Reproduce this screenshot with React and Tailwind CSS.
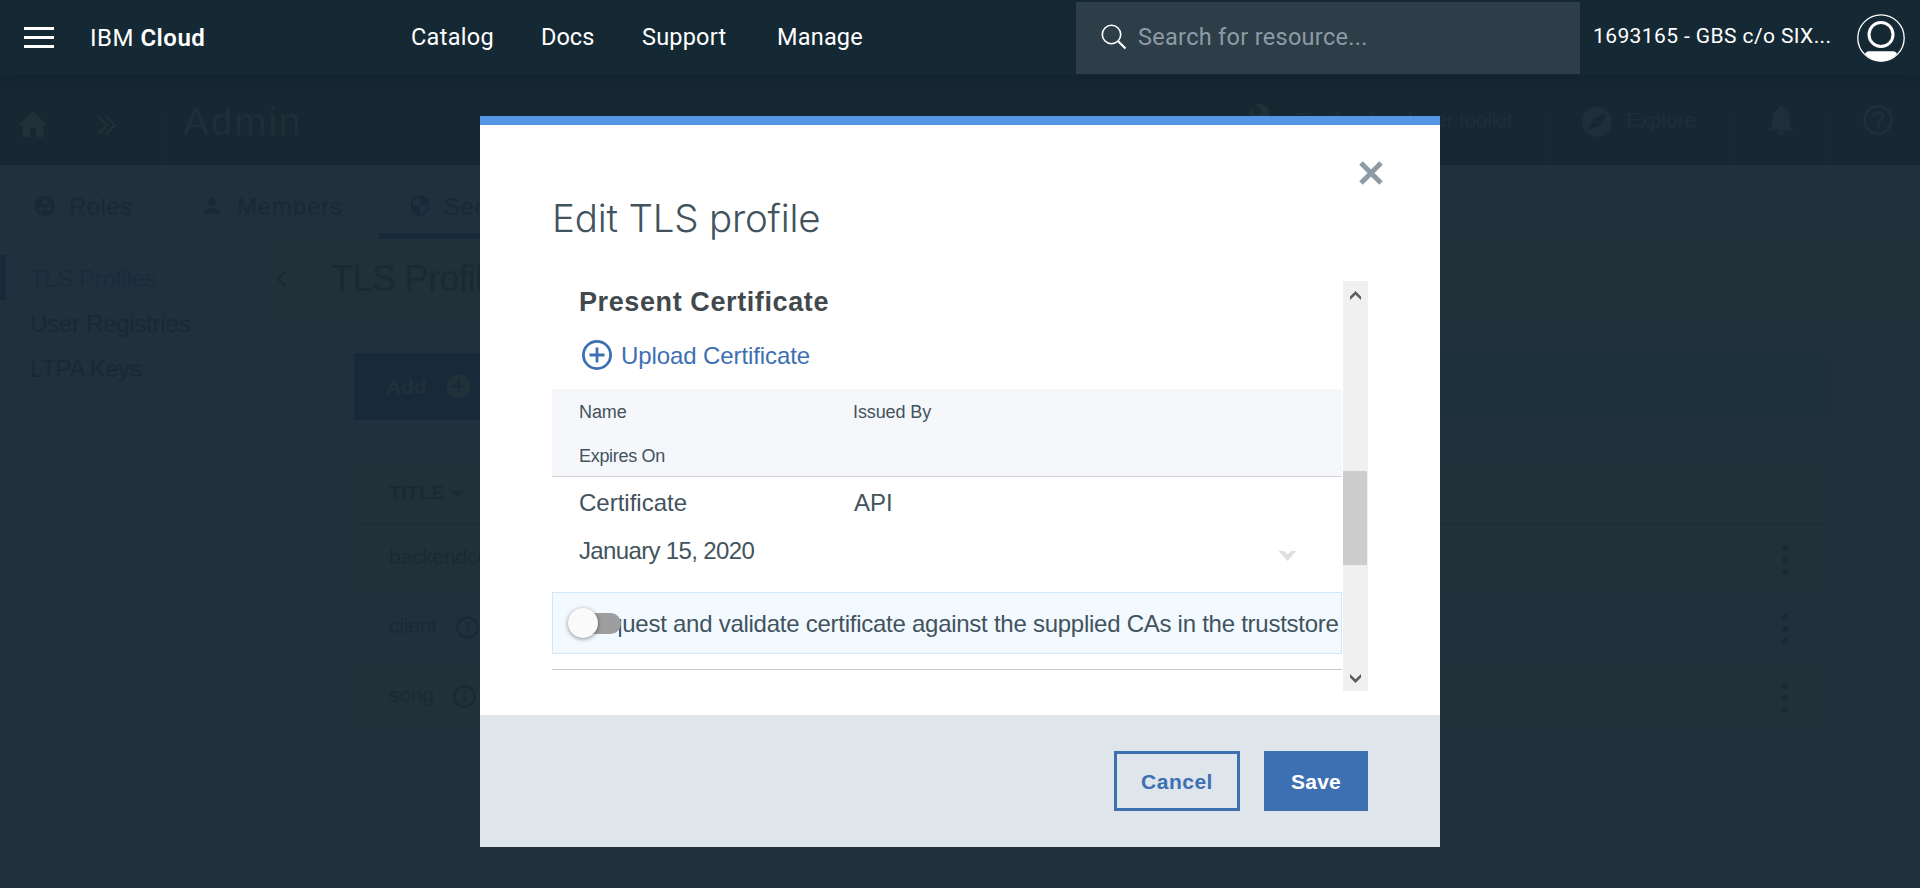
import React from "react";
import {
  MdAddCircle,
  MdBuild,
  MdExplore,
  MdGroupWork,
  MdHelpOutline,
  MdHome,
  MdInfoOutline,
  MdNotifications,
  MdPerson,
  MdSecurity,
} from "react-icons/md";

function TopBar() {
  return (
    <header className="relative z-10 flex h-[75px] items-center bg-[#152935] font-[Roboto,sans-serif] text-2xl text-white shadow-[0_6px_16px_rgba(16,32,40,0.5)]">
      <div className="ml-6 flex w-[30px] flex-col gap-1.5">
        <span className="h-[3px] bg-white" />
        <span className="h-[3px] bg-white" />
        <span className="h-[3px] bg-white" />
      </div>
      <div className="ml-9 w-[321px] whitespace-nowrap text-[24px] tracking-[0.5px]">
        IBM <span className="font-semibold">Cloud</span>
      </div>
      <nav className="flex grow whitespace-nowrap text-[23.5px]">
        <span className="w-[130px] tracking-[0.3px]">Catalog</span>
        <span className="w-[101px]">Docs</span>
        <span className="w-[135px] tracking-[0.2px]">Support</span>
        <span className="tracking-[0.2px]">Manage</span>
      </nav>
      <div className="flex h-[72px] w-[504px] items-center bg-[#2d3e49] pb-px pl-[25px] text-[#8c9ba5]">
        <svg className="h-[26px] w-[26px]" viewBox="0 0 26 26" fill="none" stroke="#fff" strokeWidth="1.6">
          <circle cx="10.5" cy="10.5" r="9.2" />
          <path d="M17 17l7.5 7.5" strokeWidth="2.2" />
        </svg>
        <span className="ml-[11px] mt-0.5 whitespace-nowrap text-[23.5px] tracking-[0.3px]">Search for resource...</span>
      </div>
      <div className="ml-[13px] w-[264px] whitespace-nowrap pb-1 text-[21px] tracking-[0.4px]">1693165 - GBS c/o SIX...</div>
      <svg className="mr-[15px] h-12 w-12" viewBox="0 0 48 48" fill="none" stroke="#fff">
        <circle cx="24" cy="24" r="23.2" strokeWidth="1.3" />
        <circle cx="24" cy="20.5" r="12" strokeWidth="3" />
        <path d="M8 40 Q9 37.2 12 37.2 H36 Q39 37.2 40 40 Q33 47.4 24 47.4 Q15 47.4 8 40 Z" fill="#fff" stroke="none" />
      </svg>
    </header>
  );
}

function SubBar() {
  return (
    <div className="flex h-[90px] bg-[#172833] text-[#1e2f39]">
      <div className="flex w-[166px] items-center border-r border-[#192a35] pl-[15px] text-[#20313a]">
        <MdHome className="mt-2.5 h-9 w-9" />
        <svg className="ml-[45px] mt-2.5 h-[22px] w-[22px]" viewBox="0 0 22 22" fill="none" stroke="currentColor" strokeWidth="2.4">
          <path d="M1.5 1.5L11 11l-9.500 9.500M9.500 1.500L19 11l-9.500 9.500" />
        </svg>
      </div>
      <div className="flex grow items-center pl-[17px] pt-1 text-[39px] tracking-[1.7px]">Admin</div>
      <div className="flex w-[304px] items-center border-r border-[#192a35] pl-[4px] text-[21px]">
        <MdBuild className="h-9 w-9 text-[#20313a]" />
        <span className="ml-[11px] whitespace-nowrap tracking-[-0.25px]">Try the developer toolkit</span>
      </div>
      <div className="flex w-[184px] items-center border-r border-[#192a35] pl-[31px] text-[21px]">
        <MdExplore className="mt-1 h-9 w-9" />
        <span className="ml-[11px] tracking-[-0.2px]">Explore</span>
      </div>
      <div className="flex w-[97px] items-center border-r border-[#192a35] pl-[31px]">
        <MdNotifications className="h-9 w-9" />
      </div>
      <div className="flex w-[91px] items-center pl-[31px]">
        <MdHelpOutline className="h-9 w-9" />
      </div>
    </div>
  );
}

function Tabs() {
  return (
    <div className="flex h-[74px] text-2xl text-[#182a36]">
      <div className="flex w-[168px] items-center pl-[33px]">
        <MdGroupWork className="mt-2 h-6 w-6" />
        <span className="ml-3 mt-2.5 tracking-[0.4px]">Roles</span>
      </div>
      <div className="flex w-[210px] items-center pl-8">
        <MdPerson className="mt-2 h-6 w-6" />
        <span className="ml-[13px] mt-2.5 tracking-[0.8px]">Members</span>
      </div>
      <div className="flex w-[188px] items-center border-b-6 border-[#182a3a] pl-[30px] text-[#182a3a]">
        <MdSecurity className="mt-3.5 h-6 w-6" />
        <span className="ml-3 mt-4 tracking-[0.4px]">Security</span>
      </div>
    </div>
  );
}

function RowMenu() {
  return (
    <div className="mr-[42px] flex flex-col gap-1.5">
      <span className="h-1.5 w-1.5 rounded-full bg-[#182a36]" />
      <span className="h-1.5 w-1.5 rounded-full bg-[#182a36]" />
      <span className="h-1.5 w-1.5 rounded-full bg-[#182a36]" />
    </div>
  );
}

function Row({ name, tint }) {
  return (
    <div className={`flex h-[69px] items-center justify-between pl-[35px] ${tint ? "bg-[#20303c]" : "bg-[#20313a]"}`}>
      <div className="-mt-0.5 flex items-center">
        <span className="-mt-1 tracking-[-0.2px]">{name}</span>
        <MdInfoOutline className="ml-[17px] h-[27px] w-[27px]" />
      </div>
      <RowMenu />
    </div>
  );
}

function Content() {
  return (
    <div className="flex grow">
      <aside className="flex w-[263px] flex-col border-r border-[#1f303a] pt-4 text-2xl text-[#172a34]">
        <div className="flex h-[45px] items-center border-l-6 border-[#182a3a] pt-0.5 pl-6 tracking-[-0.4px] text-[#1a2c3c]">TLS Profiles</div>
        <div className="flex h-[45px] items-center pt-0.5 pl-[30px] tracking-[-0.25px]">User Registries</div>
        <div className="flex h-[45px] items-center pt-0.5 pl-[30px] tracking-[-0.4px]">LTPA Keys</div>
      </aside>
      <main className="flex grow flex-col text-[21px] text-[#182b35]">
        <div className="flex h-[78px] items-center bg-[#20313a] pl-[13px]">
          <svg className="mt-0.5 h-[18px] w-[11px]" viewBox="0 0 11 18" fill="none" stroke="currentColor" strokeWidth="2.4">
            <path d="M10 1L2 9l8 8" />
          </svg>
          <span className="ml-11 mt-0.5 text-[36.5px] tracking-[-0.9px]">TLS Profiles</span>
        </div>
        <div className="ml-[91px] mr-[90px] mt-9 flex h-[67px] bg-[#1e303b]">
          <div className="flex w-[150px] items-center bg-[#182a3a] pl-8 font-bold text-[#20313a]">
            Add
            <MdAddCircle className="ml-[17px] h-[29px] w-[29px]" />
          </div>
        </div>
        <div className="ml-[91px] mr-[90px] mt-[41px] flex h-[64px] items-center border-b border-[#1a2c3c] bg-[#20313a] pl-[35px] text-[18.5px] font-bold tracking-[0.9px]">
          TITLE
          <svg className="ml-1.5 mt-0.5 h-1.5 w-3" viewBox="0 0 12 6" fill="currentColor">
            <path d="M0 0h12L6 6z" />
          </svg>
        </div>
        <div className="ml-[91px] mr-[90px]">
          <Row name="backendcerts" />
          <Row name="client" tint />
          <Row name="song" />
        </div>
      </main>
    </div>
  );
}

function Toggle() {
  return (
    <div className="absolute top-[15px] left-[15px] flex h-[30px] w-[54px] items-center pl-0.5">
      <span className="h-[21px] w-[51px] rounded-full bg-[#9e9e9e]" />
      <span className="absolute top-0 left-0 h-[30px] w-[30px] rounded-full bg-[#fafafa] shadow-[0_1px_4px_rgba(0,0,0,0.45)]" />
    </div>
  );
}

function Dialog() {
  return (
    <div className="absolute top-[116px] left-[480px] z-20 flex h-[731px] w-[960px] flex-col border-t-9 border-[#5596e6] bg-white text-[#42535d]">
      <div className="flex h-[156px] justify-between pl-[72px] pr-[57px]">
        <h1 className="mt-[68px] whitespace-nowrap font-[Inter,sans-serif] text-[38.500px] leading-[50px] font-light tracking-[-0.2px]">Edit TLS profile</h1>
        <svg className="mt-[36px] h-6 w-6" viewBox="0 0 24 24" fill="none" stroke="#8c9ba5" strokeWidth="5">
          <path d="M2 2l20 20M22 2L2 22" />
        </svg>
      </div>
      <div className="ml-[72px] flex h-[410px] w-[816px]">
        <div className="flex w-[790px] flex-col">
          <h2 className="ml-[27px] mt-[5px] text-[27px] leading-8 font-bold tracking-[0.6px] text-[#41494c]">Present Certificate</h2>
          <div className="ml-[29px] mt-[21px] flex h-8 items-center text-2xl text-[#3d70b2]">
            <svg className="h-8 w-8" viewBox="0 0 32 32" fill="none" stroke="currentColor" strokeWidth="2.8">
              <circle cx="16" cy="16" r="13.600" />
              <path d="M16 8.500v15M8.500 16h15" />
            </svg>
            <span className="ml-2 mt-0.5 tracking-[-0.1px]">Upload Certificate</span>
          </div>
          <div className="mt-[18px] grid h-[88px] grid-cols-[274px_1fr] grid-rows-[44px_43px] items-center border-b border-[#d3d6d8] bg-[#f5f7fb] pl-[27px] text-[18px]">
            <span className="mt-0.5 tracking-[-0.1px]">Name</span>
            <span className="mt-0.5 tracking-[-0.1px]">Issued By</span>
            <span className="mt-1 tracking-[-0.3px]">Expires On</span>
          </div>
          <div className="grid h-[115px] grid-cols-[275px_398px_1fr] grid-rows-[50px_46px] items-center pl-[27px] text-2xl">
            <span className="mt-0.5">Certificate</span>
            <span className="mt-0.5">API</span>
            <span />
            <span className="mt-0.5 tracking-[-0.65px]">January 15, 2020</span>
            <span />
            <svg className="ml-[26px] mt-3 h-2.5 w-[19px]" viewBox="0 0 18 10" fill="#dfdfdf">
              <path d="M0 0h5.500L9 3.400 12.500 0H18L9 10z" />
            </svg>
          </div>
          <div className="relative flex h-[62px] items-center border border-[#cfe7fa] bg-[#f2f9ff] pl-[26px] text-2xl">
            <span className="mt-0.5 whitespace-nowrap tracking-[-0.26px]">Request and validate certificate against the supplied CAs in the truststore</span>
            <span className="absolute top-4 left-3 h-7 w-[54px] bg-[#f2f9ff]" />
            <Toggle />
          </div>
          <div className="mt-[15px] h-px bg-[#c8cacc]" />
        </div>
        <div className="ml-px flex w-[25px] flex-col bg-[#f0f0f0]">
          <svg className="mt-[10px] ml-[7px] h-[9px] w-[11px]" viewBox="0 0 11 9" fill="#5e5e5e">
            <path d="M5.500 0L11 5.500V9L5.500 3.700 0 9V5.500z" />
          </svg>
          <div className="mt-[171px] h-[94px] w-6 bg-[#cdcdcd]" />
          <svg className="mt-[109px] ml-[7px] h-[9px] w-[11px]" viewBox="0 0 11 9" fill="#5e5e5e">
            <path d="M5.500 9L11 3.500V0L5.500 5.300 0 0v3.500z" />
          </svg>
        </div>
      </div>
      <footer className="mt-6 flex grow items-start justify-end gap-6 bg-[#dee5eb] pt-9 pr-[72px] text-[21px] font-bold">
        <button className="h-[60px] w-[126px] border-3 border-[#3d70b2] pt-0.5 tracking-[0.5px] text-[#3d70b2]">Cancel</button>
        <button className="h-[60px] w-[104px] bg-[#3d70b2] pt-0.5 tracking-[0.2px] text-white">Save</button>
      </footer>
    </div>
  );
}

export default function App() {
  return (
    <div className="relative flex h-[888px] w-[1920px] flex-col overflow-hidden bg-[#20303c] font-['Liberation_Sans',Arial,sans-serif]">
      <TopBar />
      <SubBar />
      <Tabs />
      <Content />
      <Dialog />
    </div>
  );
}
